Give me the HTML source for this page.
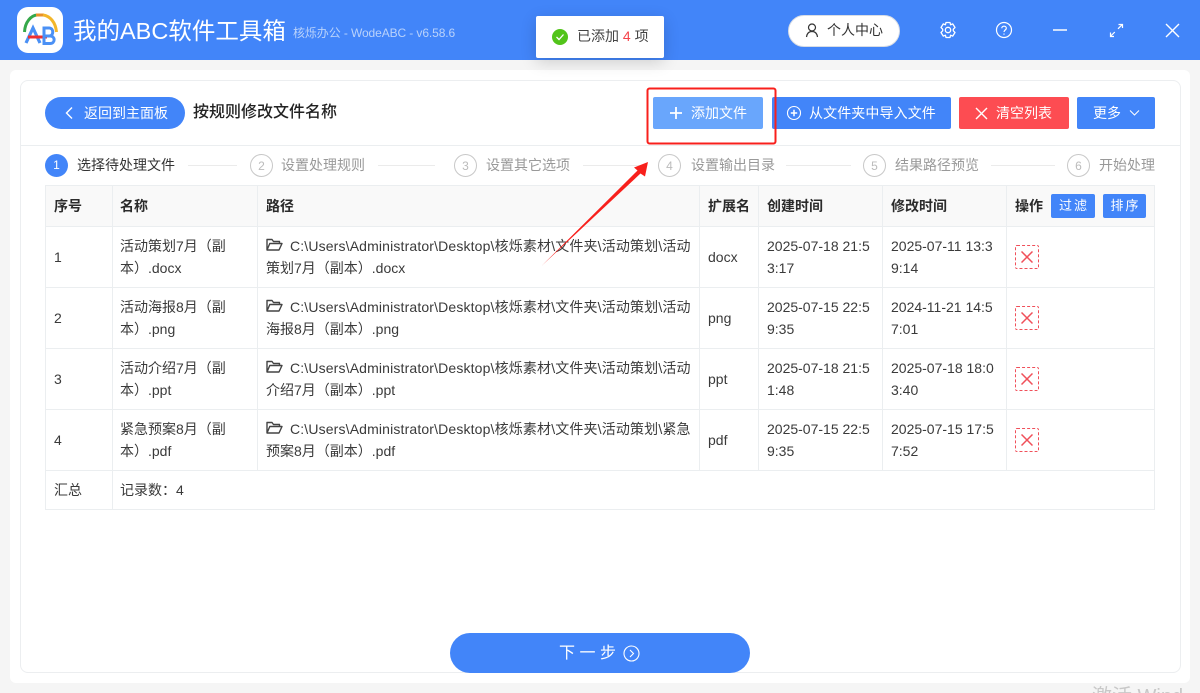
<!DOCTYPE html>
<html lang="zh"><head><meta charset="utf-8"><title>我的ABC软件工具箱</title>
<style>
*{box-sizing:border-box}
html,body{margin:0;padding:0;width:1200px;height:693px;overflow:hidden;background:#f5f5f5}
body{position:relative;font-family:"Liberation Sans","Noto Sans CJK SC",sans-serif;font-size:14px;color:#333}
.a{position:absolute;white-space:nowrap}
.btn{position:absolute;top:97px;height:32px;border-radius:2px;background:#4285f9;color:#fff;line-height:32px;white-space:nowrap;font-size:14px}
.h{position:absolute;background:#ebeef0}
.cell{position:absolute;line-height:22px;white-space:nowrap;color:#3a3a3a;font-size:14px}
.p{letter-spacing:.15px}
.th{position:absolute;top:197px;line-height:18px;font-weight:700;color:#2b2b2b;font-size:14px;white-space:nowrap}
.step{position:absolute;top:154px;width:23px;height:23px;border:1px solid #c8c8c8;border-radius:50%;text-align:center;line-height:22px;color:#bbb;font-size:12px;background:#fff}
.st{position:absolute;top:156px;line-height:19px;color:#999;font-size:14px;white-space:nowrap}
.ln{position:absolute;top:165px;height:1px;background:#ebebeb}
.del{position:absolute;left:1015px;width:24px;height:24px;border:1px dashed #f0505a;border-radius:2px}
</style></head><body>
<div class="a" style="left:0;top:0;width:1200px;height:60px;background:#4285f9"></div>
<svg class="a" style="left:17px;top:7px" width="46" height="46" viewBox="0 0 46 46">
<rect width="46" height="46" rx="11" fill="#fff"/>
<path d="M7.500 25C8 15 14 8.500 20 8" fill="none" stroke="#35a84a" stroke-width="3"/>
<path d="M19 8H27" fill="none" stroke="#e8902a" stroke-width="3"/>
<path d="M26 8C33 9 38.500 15 39.500 25" fill="none" stroke="#f3b62a" stroke-width="3"/>
<path d="M9 36L16 21L23 36" fill="none" stroke="#4a90f5" stroke-width="3.200"/>
<path d="M11 30H30" stroke="#ee3030" stroke-width="3"/>
<path d="M27 21H32C37 21 37 29 32 29H27Z" fill="none" stroke="#4a90f5" stroke-width="3"/>
<path d="M27 29H33C38.500 29 38.500 36.500 33 36.500H27Z" fill="none" stroke="#4a90f5" stroke-width="3"/>
</svg>
<div class="a" style="left:73px;top:13px;font-size:23.500px;line-height:36px;color:#fff">我的ABC软件工具箱</div>
<div class="a" style="left:293px;top:25px;font-size:12px;line-height:17px;color:#b9d2fb;letter-spacing:-.1px">核烁办公 - WodeABC - v6.58.6</div>

<div class="a" style="left:788px;top:15px;width:112px;height:32px;background:#fff;border-radius:16px;border:1px solid #d8dde5"></div>
<svg class="a" style="left:805px;top:23px" width="14" height="15" viewBox="0 0 14 15" fill="none" stroke="#333" stroke-width="1.200"><circle cx="7" cy="4.500" r="3.500"/><path d="M1.500 14C2 10.500 4 8.500 7 8.500S12 10.500 12.500 14"/></svg>
<div class="a" style="left:827px;top:21px;line-height:18px;color:#333">个人中心</div>
<svg class="a" style="left:939px;top:21px" width="18" height="18" viewBox="0 0 18 18" fill="none" stroke="#fff" stroke-width="1.300"><path d="M7 1.500H11L11.600 3.800L13.700 2.900L16 6.500L14.300 8.200V9.800L16 11.500L13.700 15.100L11.600 14.200L11 16.500H7L6.400 14.200L4.300 15.100L2 11.500L3.700 9.800V8.200L2 6.500L4.300 2.900L6.400 3.800Z" stroke-linejoin="round"/><circle cx="9" cy="9" r="2.700"/></svg>
<svg class="a" style="left:995px;top:21px" width="18" height="18" viewBox="0 0 18 18" fill="none" stroke="#fff" stroke-width="1.200"><circle cx="9" cy="9" r="7.500"/><path d="M6.800 7.200C6.800 4.500 11.300 4.500 11.300 7.200C11.300 9 9 9 9 11"/><path d="M9 12.500V13.700"/></svg>
<div class="a" style="left:1053px;top:29px;width:14px;height:2px;background:#cfdffb"></div>
<svg class="a" style="left:1109px;top:23px" width="15" height="15" viewBox="0 0 15 15" fill="none" stroke="#fff" stroke-width="1.200"><path d="M9 5.800L13 1.800M9.500 1.500H13.500V5M5.800 9L1.800 13M1.500 9.500V13.500H5"/></svg>
<svg class="a" style="left:1165px;top:23px" width="15" height="15" viewBox="0 0 15 15" fill="none" stroke="#fff" stroke-width="1.400"><path d="M1 1L14 14M14 1L1 14"/></svg>

<div class="a" style="left:10px;top:70px;width:1180px;height:613px;background:#fff;border-radius:6px"></div>
<div class="a" style="left:20px;top:80px;width:1161px;height:593px;background:#fff;border:1px solid #eceef0;border-radius:8px"></div>
<div class="a" style="left:21px;top:145px;width:1159px;height:1px;background:#ebeef0"></div>

<div class="a" style="left:45px;top:97px;width:140px;height:32px;background:#4285f9;border-radius:16px"></div>
<svg class="a" style="left:64px;top:106px" width="10" height="14" viewBox="0 0 10 14" fill="none" stroke="#fff" stroke-width="1.400"><path d="M8 1.500L2.500 7L8 12.500"/></svg>
<div class="a" style="left:84px;top:104px;line-height:18px;color:#fff;font-size:14px">返回到主面板</div>
<div class="a" style="left:193px;top:102px;line-height:22px;font-size:16px;font-weight:500;color:#222">按规则修改文件名称</div>

<div class="btn" style="left:653px;width:110px;background:#69a6fc"></div>
<svg class="a" style="left:669px;top:106px" width="14" height="14" viewBox="0 0 14 14" stroke="#fff" stroke-width="1.800"><path d="M7 1V13M1 7H13"/></svg>
<div class="a" style="left:691px;top:104px;line-height:18px;color:#fff;font-size:14px">添加文件</div>
<div class="btn" style="left:772px;width:179px"></div>
<svg class="a" style="left:786px;top:105px" width="16" height="16" viewBox="0 0 16 16" fill="none" stroke="#fff" stroke-width="1.100"><circle cx="8" cy="8" r="6.500"/><path d="M8 4.800V11.200M4.800 8H11.200" stroke-width="1.500"/></svg>
<div class="a" style="left:809px;top:104px;line-height:18px;color:#fff;font-size:14px;letter-spacing:.1px">从文件夹中导入文件</div>
<div class="btn" style="left:959px;width:110px;background:#fd4c52"></div>
<svg class="a" style="left:975px;top:107px" width="13" height="13" viewBox="0 0 13 13" fill="none" stroke="#fff" stroke-width="1.400"><path d="M1 1L12 12M12 1L1 12"/></svg>
<div class="a" style="left:996px;top:104px;line-height:18px;color:#fff;font-size:14px">清空列表</div>
<div class="btn" style="left:1077px;width:78px"></div>
<div class="a" style="left:1093px;top:104px;line-height:18px;color:#fff;font-size:14px">更多</div>
<svg class="a" style="left:1129px;top:109px" width="11" height="8" viewBox="0 0 11 8" fill="none" stroke="#fff"><path d="M1 1.500L5.500 6L10 1.500"/></svg>

<div class="a" style="left:45px;top:154px;width:23px;height:23px;background:#4285f9;border-radius:50%;color:#fff;text-align:center;line-height:23px;font-size:12px">1</div>
<div class="st" style="left:77px;color:#333">选择待处理文件</div><div class="ln" style="left:188px;width:49px"></div>
<div class="step" style="left:250px">2</div><div class="st" style="left:281px">设置处理规则</div><div class="ln" style="left:378px;width:57px"></div>
<div class="step" style="left:454px">3</div><div class="st" style="left:486px">设置其它选项</div><div class="ln" style="left:583px;width:61px"></div>
<div class="step" style="left:658px">4</div><div class="st" style="left:691px">设置输出目录</div><div class="ln" style="left:786px;width:65px"></div>
<div class="step" style="left:863px">5</div><div class="st" style="left:895px">结果路径预览</div><div class="ln" style="left:991px;width:64px"></div>
<div class="step" style="left:1067px">6</div><div class="st" style="left:1099px">开始处理</div>

<div class="a" style="left:45px;top:185px;width:1110px;height:41px;background:#f9f9f9"></div>
<div class="h" style="left:45px;top:185px;width:1110px;height:1px"></div>
<div class="h" style="left:45px;top:226px;width:1110px;height:1px"></div>
<div class="h" style="left:45px;top:287px;width:1110px;height:1px"></div>
<div class="h" style="left:45px;top:348px;width:1110px;height:1px"></div>
<div class="h" style="left:45px;top:409px;width:1110px;height:1px"></div>
<div class="h" style="left:45px;top:470px;width:1110px;height:1px"></div>
<div class="h" style="left:45px;top:509px;width:1110px;height:1px"></div>
<div class="h" style="left:45px;top:185px;width:1px;height:325px"></div>
<div class="h" style="left:112px;top:185px;width:1px;height:325px"></div>
<div class="h" style="left:257px;top:185px;width:1px;height:285px"></div>
<div class="h" style="left:699px;top:185px;width:1px;height:285px"></div>
<div class="h" style="left:758px;top:185px;width:1px;height:285px"></div>
<div class="h" style="left:882px;top:185px;width:1px;height:285px"></div>
<div class="h" style="left:1006px;top:185px;width:1px;height:285px"></div>
<div class="h" style="left:1154px;top:185px;width:1px;height:325px"></div>

<div class="th" style="left:54px">序号</div><div class="th" style="left:120px">名称</div><div class="th" style="left:266px">路径</div><div class="th" style="left:708px">扩展名</div><div class="th" style="left:767px">创建时间</div><div class="th" style="left:891px">修改时间</div><div class="th" style="left:1015px">操作</div>
<div class="a" style="left:1051px;top:194px;width:44px;height:24px;background:#4285f9;border-radius:2px;color:#fff;text-align:center;line-height:24px;font-size:13px;letter-spacing:2px;padding-left:2px">过滤</div>
<div class="a" style="left:1103px;top:194px;width:43px;height:24px;background:#4285f9;border-radius:2px;color:#fff;text-align:center;line-height:24px;font-size:13px;letter-spacing:2px;padding-left:2px">排序</div>

<div class="cell" style="left:54px;top:246px">1</div><div class="cell" style="left:120px;top:235px">活动策划7月（副<br>本）.docx</div><div class="cell p" style="left:290px;top:235px">C:\Users\Administrator\Desktop\核烁素材\文件夹\活动策划\活动</div><div class="cell" style="left:266px;top:257px">策划7月（副本）.docx</div><div class="cell" style="left:708px;top:246px">docx</div><div class="cell" style="left:767px;top:235px">2025-07-18 21:5<br>3:17</div><div class="cell" style="left:891px;top:235px">2025-07-11 13:3<br>9:14</div>
<div class="cell" style="left:54px;top:307px">2</div><div class="cell" style="left:120px;top:296px">活动海报8月（副<br>本）.png</div><div class="cell p" style="left:290px;top:296px">C:\Users\Administrator\Desktop\核烁素材\文件夹\活动策划\活动</div><div class="cell" style="left:266px;top:318px">海报8月（副本）.png</div><div class="cell" style="left:708px;top:307px">png</div><div class="cell" style="left:767px;top:296px">2025-07-15 22:5<br>9:35</div><div class="cell" style="left:891px;top:296px">2024-11-21 14:5<br>7:01</div>
<div class="cell" style="left:54px;top:368px">3</div><div class="cell" style="left:120px;top:357px">活动介绍7月（副<br>本）.ppt</div><div class="cell p" style="left:290px;top:357px">C:\Users\Administrator\Desktop\核烁素材\文件夹\活动策划\活动</div><div class="cell" style="left:266px;top:379px">介绍7月（副本）.ppt</div><div class="cell" style="left:708px;top:368px">ppt</div><div class="cell" style="left:767px;top:357px">2025-07-18 21:5<br>1:48</div><div class="cell" style="left:891px;top:357px">2025-07-18 18:0<br>3:40</div>
<div class="cell" style="left:54px;top:429px">4</div><div class="cell" style="left:120px;top:418px">紧急预案8月（副<br>本）.pdf</div><div class="cell p" style="left:290px;top:418px">C:\Users\Administrator\Desktop\核烁素材\文件夹\活动策划\紧急</div><div class="cell" style="left:266px;top:440px">预案8月（副本）.pdf</div><div class="cell" style="left:708px;top:429px">pdf</div><div class="cell" style="left:767px;top:418px">2025-07-15 22:5<br>9:35</div><div class="cell" style="left:891px;top:418px">2025-07-15 17:5<br>7:52</div>
<div class="cell" style="left:54px;top:479px">汇总</div><div class="cell" style="left:120px;top:479px">记录数：4</div>

<svg class="a" style="left:266px;top:238px" width="17" height="13" viewBox="0 0 17 13" fill="none" stroke="#444" stroke-width="1.400"><path d="M1 12V1.500H6L7.500 3.500H13.500V5.500M1 12H13L16 5.500H3.800L1 12Z" stroke-linejoin="round"/></svg>
<svg class="a" style="left:266px;top:299px" width="17" height="13" viewBox="0 0 17 13" fill="none" stroke="#444" stroke-width="1.400"><path d="M1 12V1.500H6L7.500 3.500H13.500V5.500M1 12H13L16 5.500H3.800L1 12Z" stroke-linejoin="round"/></svg>
<svg class="a" style="left:266px;top:360px" width="17" height="13" viewBox="0 0 17 13" fill="none" stroke="#444" stroke-width="1.400"><path d="M1 12V1.500H6L7.500 3.500H13.500V5.500M1 12H13L16 5.500H3.800L1 12Z" stroke-linejoin="round"/></svg>
<svg class="a" style="left:266px;top:421px" width="17" height="13" viewBox="0 0 17 13" fill="none" stroke="#444" stroke-width="1.400"><path d="M1 12V1.500H6L7.500 3.500H13.500V5.500M1 12H13L16 5.500H3.800L1 12Z" stroke-linejoin="round"/></svg>

<div class="del" style="top:245px"><svg style="position:absolute;left:5px;top:5px" width="12" height="12" viewBox="0 0 12 12" stroke="#f0505a" stroke-width="1.500"><path d="M.5 .5L11.500 11.500M11.500 .5L.5 11.500"/></svg></div>
<div class="del" style="top:306px"><svg style="position:absolute;left:5px;top:5px" width="12" height="12" viewBox="0 0 12 12" stroke="#f0505a" stroke-width="1.500"><path d="M.5 .5L11.500 11.500M11.500 .5L.5 11.500"/></svg></div>
<div class="del" style="top:367px"><svg style="position:absolute;left:5px;top:5px" width="12" height="12" viewBox="0 0 12 12" stroke="#f0505a" stroke-width="1.500"><path d="M.5 .5L11.500 11.500M11.500 .5L.5 11.500"/></svg></div>
<div class="del" style="top:428px"><svg style="position:absolute;left:5px;top:5px" width="12" height="12" viewBox="0 0 12 12" stroke="#f0505a" stroke-width="1.500"><path d="M.5 .5L11.500 11.500M11.500 .5L.5 11.500"/></svg></div>

<div class="a" style="left:450px;top:633px;width:300px;height:40px;background:#4285f9;border-radius:20px"></div>
<div class="a" style="left:559px;top:643px;line-height:22px;font-size:16px;color:#fff;letter-spacing:4.500px">下一步</div>
<svg class="a" style="left:623px;top:645px" width="17" height="17" viewBox="0 0 17 17" fill="none" stroke="#fff" stroke-width="1.100"><circle cx="8.500" cy="8.500" r="7.500"/><path d="M7 5L10.500 8.500L7 12"/></svg>

<div class="a" style="left:1092px;top:685px;line-height:24px;font-size:20px;color:#c8c8c8">激活 Wind</div>

<div class="a" style="left:536px;top:16px;width:128px;height:42px;background:#fff;border-radius:2px;box-shadow:0 4px 16px rgba(0,0,0,.16)"></div>
<svg class="a" style="left:552px;top:29px" width="16" height="16" viewBox="0 0 16 16"><circle cx="8" cy="8" r="8" fill="#52c41a"/><path d="M4.500 8L7 10.500L11.500 5.500" fill="none" stroke="#fff" stroke-width="1.300"/></svg>
<div class="a" style="left:577px;top:27px;line-height:18px;font-size:14px;color:#444">已添加 <span style="color:#f5444c">4</span> 项</div>

<svg class="a" style="left:0;top:0;pointer-events:none" width="1200" height="693" fill="none">
<rect x="647.500" y="88.500" width="128" height="55" rx="2" stroke="#f8201c" stroke-width="2"/>
<path d="M542 265.500L640.500 173.500L645 176.500L648 162L634 167.500L637.500 170.500Z" fill="#f8201c"/>
</svg>
</body></html>
